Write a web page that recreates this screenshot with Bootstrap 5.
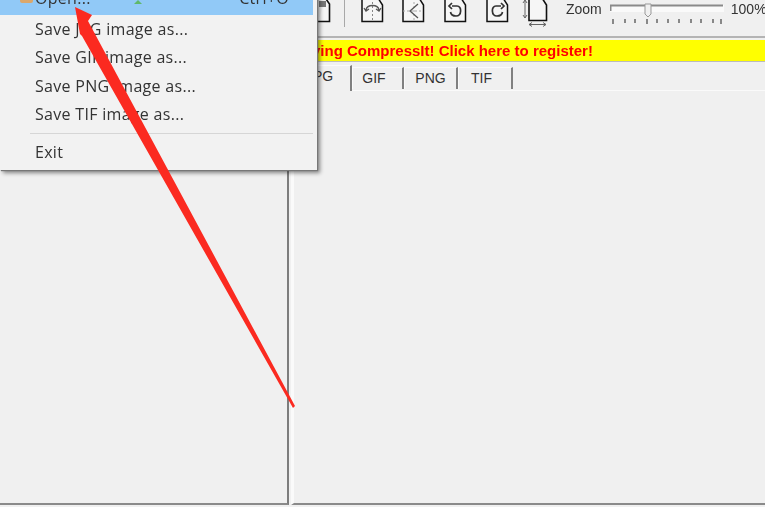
<!DOCTYPE html>
<html lang="en">
<head>
  <meta charset="UTF-8">
  <meta name="viewport" content="width=device-width, initial-scale=1.0">
  <title>CompressIt</title>
  <link href="https://cdn.jsdelivr.net/npm/bootstrap@5.3.0/dist/css/bootstrap.min.css" rel="stylesheet">
  <style>
    html, body { height: 507px; overflow: hidden; }
    body { background: #f0f0f0; position: relative; font-family: "Liberation Sans", Arial, sans-serif; color: #333; }
    .app-shell { height: 507px; filter: blur(.35px); }
    .left-pane { box-sizing: content-box; width: 287px; height: 503px; border-right: 2px solid #7d7d7d; border-bottom: 2px solid #8a8a8a; margin-right: 2px; flex: none; }
    .right-pane { height: 505px; border-left: 3px solid #fafafa; border-bottom: 2px solid #8a8a8a; min-width: 0; }
    .tool-strip { height: 38px; border-bottom: 2px solid #b4b4b4; padding-left: 24px; overflow: hidden; }
    .tool-strip svg { flex: none; display: block; }
    .tool-sep { width: 1px; height: 27px; background: #a8a8a8; margin: 0 16px 0 13px; flex: none; }
    .icon-gap { margin-left: 19px; }
    .icon-gap-first { margin-left: 18px; }
    .icon-gap-tall { margin-left: 13px; }
    .zoom-label { font-size: 14px; line-height: 18px; margin: 0 8px 0 16px; color: #333; }
    .zoom-pct { font-size: 14px; line-height: 18px; margin-left: 6px; white-space: nowrap; color: #333; }
    .reg-banner { background: #ff0; color: #f00; font-weight: 700; font-size: 15px; line-height: 21px; height: 22px; margin-top: 2px; border-bottom: 1px solid #bbb; padding-left: 18px; white-space: nowrap; overflow: hidden; }
    .fmt-tabs { border-bottom: 0; height: 29px; margin-top: 3px; position: relative; }
    .fmt-tabs::after { content: ""; position: absolute; left: 0; right: 0; top: 25px; height: 1px; background: #fafafa; }
    .fmt-tabs .nav-link { font-size: 14px; line-height: 16px; color: #333; border: 0; border-left: 1px solid #fafafa; border-top: 1px solid #fafafa; border-right: 2px solid #808080; border-radius: 0; margin: 2px 0 0 0; padding: 2px 7px 0 0; height: 22px; background: #f0f0f0; text-align: center; position: relative; z-index: 1; }
    .fmt-tabs .nav-link.active { margin-top: 0; height: 26px; padding-top: 2px; padding-right: 6px; width: 58px; background: #f0f0f0; color: #333; }
    .tab-gif { width: 52px; }
    .fmt-tabs .nav-link.tab-png { width: 54px; padding-right: 0; }
    .tab-tif { width: 55px; }
    .file-menu { left: 0; top: -14px; width: 317px; height: 184px; min-width: 0; background: #f2f2f2; border: 0; border-radius: 0; padding: 0; margin: 0; box-shadow: 1px 1px 1px #777, 3px 3px 4px rgba(0,0,0,.45); font-family: "Open Sans", sans-serif; filter: blur(.35px); }
    .file-menu .dropdown-item { font-size: 16px; letter-spacing: .3px; line-height: 20px; padding: 4px 4px 4px 35px; color: #333; height: 28.5px; }
    .file-menu .dropdown-item.active { background: #91c9f7; color: #333; width: 313px; padding-top: 2px; padding-right: 24px; }
    .file-menu .dropdown-divider { margin: 4px 4px 4px 30px; border-color: #d6d6d6; opacity: 1; }
    .open-glyph { position: absolute; left: 20px; top: 12px; width: 13px; height: 5px; background: #dba76b; border-radius: 0 0 2px 2px; }
    .green-glyph { position: absolute; left: 134px; top: 14px; width: 0; height: 0; border-left: 4px solid transparent; border-right: 4px solid transparent; border-bottom: 4px solid #5fb86a; }
    .red-arrow { position: absolute; left: 0; top: 0; z-index: 1100; pointer-events: none; filter: blur(.4px); }
  </style>
</head>
<body>
<div class="d-flex app-shell">
  <div class="left-pane"></div>
  <div class="right-pane flex-grow-1 d-flex flex-column">
    <div class="tool-strip d-flex align-items-start">
      <svg width="13" height="23" viewBox="0 0 13 23"><path d="M0 21.500H11.500V4L8 -1" fill="#f6f6f6" stroke="#111" stroke-width="1.600"/><path d="M1 7V1H8V7Z" fill="#777"/></svg>
      <div class="tool-sep"></div>
      <svg width="23" height="23" viewBox="0 0 23 23"><path d="M1 -2V21.500H21.500V5L17 -2" fill="#f6f6f6" stroke="#111" stroke-width="1.500"/><path d="M11.500 2V21" stroke="#888" stroke-dasharray="2 2"/><path d="M5 10C6 4 17 4 18 10M3 8L5 11L8 9M20 8L18 11L15 9" fill="none" stroke="#555" stroke-width="1.300"/></svg>
      <svg class="icon-gap-first" width="23" height="23" viewBox="0 0 23 23"><path d="M1 -2V21.500H21.500V5L17 -2" fill="#f6f6f6" stroke="#111" stroke-width="1.500"/><path d="M1 11H21M12 2V21" stroke="#aaa" stroke-dasharray="2 2"/><path d="M16 4L8 11L16 18" fill="none" stroke="#555" stroke-width="1.300"/></svg>
      <svg class="icon-gap" width="23" height="23" viewBox="0 0 23 23"><path d="M1 -2V21.500H21.500V5L17 -2" fill="#f6f6f6" stroke="#111" stroke-width="1.500"/><path d="M8 6H13C18 6 18 16 12 16C9 16 7 15 6.500 12M8 3L5 6L8 9" fill="none" stroke="#333" stroke-width="1.700"/></svg>
      <svg class="icon-gap" width="23" height="23" viewBox="0 0 23 23"><path d="M1 -2V21.500H21.500V5L17 -2" fill="#f6f6f6" stroke="#111" stroke-width="1.500"/><path d="M15 6H10C5 6 5 16 11 16C14 16 16 15 16.500 12M15 3L18 6L15 9" fill="none" stroke="#333" stroke-width="1.700"/></svg>
      <svg class="icon-gap-tall" width="28" height="27" viewBox="0 0 28 27"><path d="M7 -2V20.500H24.500V5L20 -2" fill="#f6f6f6" stroke="#111" stroke-width="1.600"/><path d="M3 0V18M1 3L3 0L5 3M1 15L3 18L5 15M7 24.500H24M10 22.500L7 24.500L10 26.500M21 22.500L24 24.500L21 26.500" fill="none" stroke="#666"/></svg>
      <div class="zoom-label">Zoom</div>
      <svg width="115" height="26" viewBox="0 0 115 26">
        <rect x="0" y="5" width="114" height="7" fill="#fafafa"/>
        <path d="M0.500 11V5.500H113" fill="none" stroke="#8a8a8a" stroke-width="2"/>
        <path d="M35 4H41V14L38 17L35 14Z" fill="#f0f0f0" stroke="#999"/>
        <path d="M3 19v5M15 19v4M25 19v4M37 19v5M47 19v4M58 19v4M69 19v4M81 19v4M91 19v4M103 19v4M111 19v5" stroke="#444" stroke-width="1.200"/>
      </svg>
      <div class="zoom-pct">100%</div>
    </div>
    <div class="reg-banner">ying CompressIt! Click here to register!</div>
    <ul class="nav fmt-tabs flex-nowrap">
      <li class="nav-item"><a class="nav-link active" href="#">JPG</a></li>
      <li class="nav-item"><a class="nav-link tab-gif" href="#">GIF</a></li>
      <li class="nav-item"><a class="nav-link tab-png" href="#">PNG</a></li>
      <li class="nav-item"><a class="nav-link tab-tif" href="#">TIF</a></li>
    </ul>
  </div>
</div>

<div class="dropdown-menu d-block position-absolute file-menu">
  <a class="dropdown-item active d-flex justify-content-between" href="#"><span>Open...</span><span>Ctrl+O</span></a>
  <a class="dropdown-item" href="#">Save JPG image as...</a>
  <a class="dropdown-item" href="#">Save GIF image as...</a>
  <a class="dropdown-item" href="#">Save PNG image as...</a>
  <a class="dropdown-item" href="#">Save TIF image as...</a>
  <hr class="dropdown-divider">
  <a class="dropdown-item" href="#">Exit</a>
  <span class="open-glyph"></span>
  <span class="green-glyph"></span>
</div>

<svg class="red-arrow" width="765" height="507" viewBox="0 0 765 507"><polygon points="75,7 92,15 88,21 295,406 293,408 82,36 80,34" fill="#fb2a20"/></svg>
<script src="https://cdn.jsdelivr.net/npm/bootstrap@5.3.0/dist/js/bootstrap.bundle.min.js"></script>
</body>
</html>
